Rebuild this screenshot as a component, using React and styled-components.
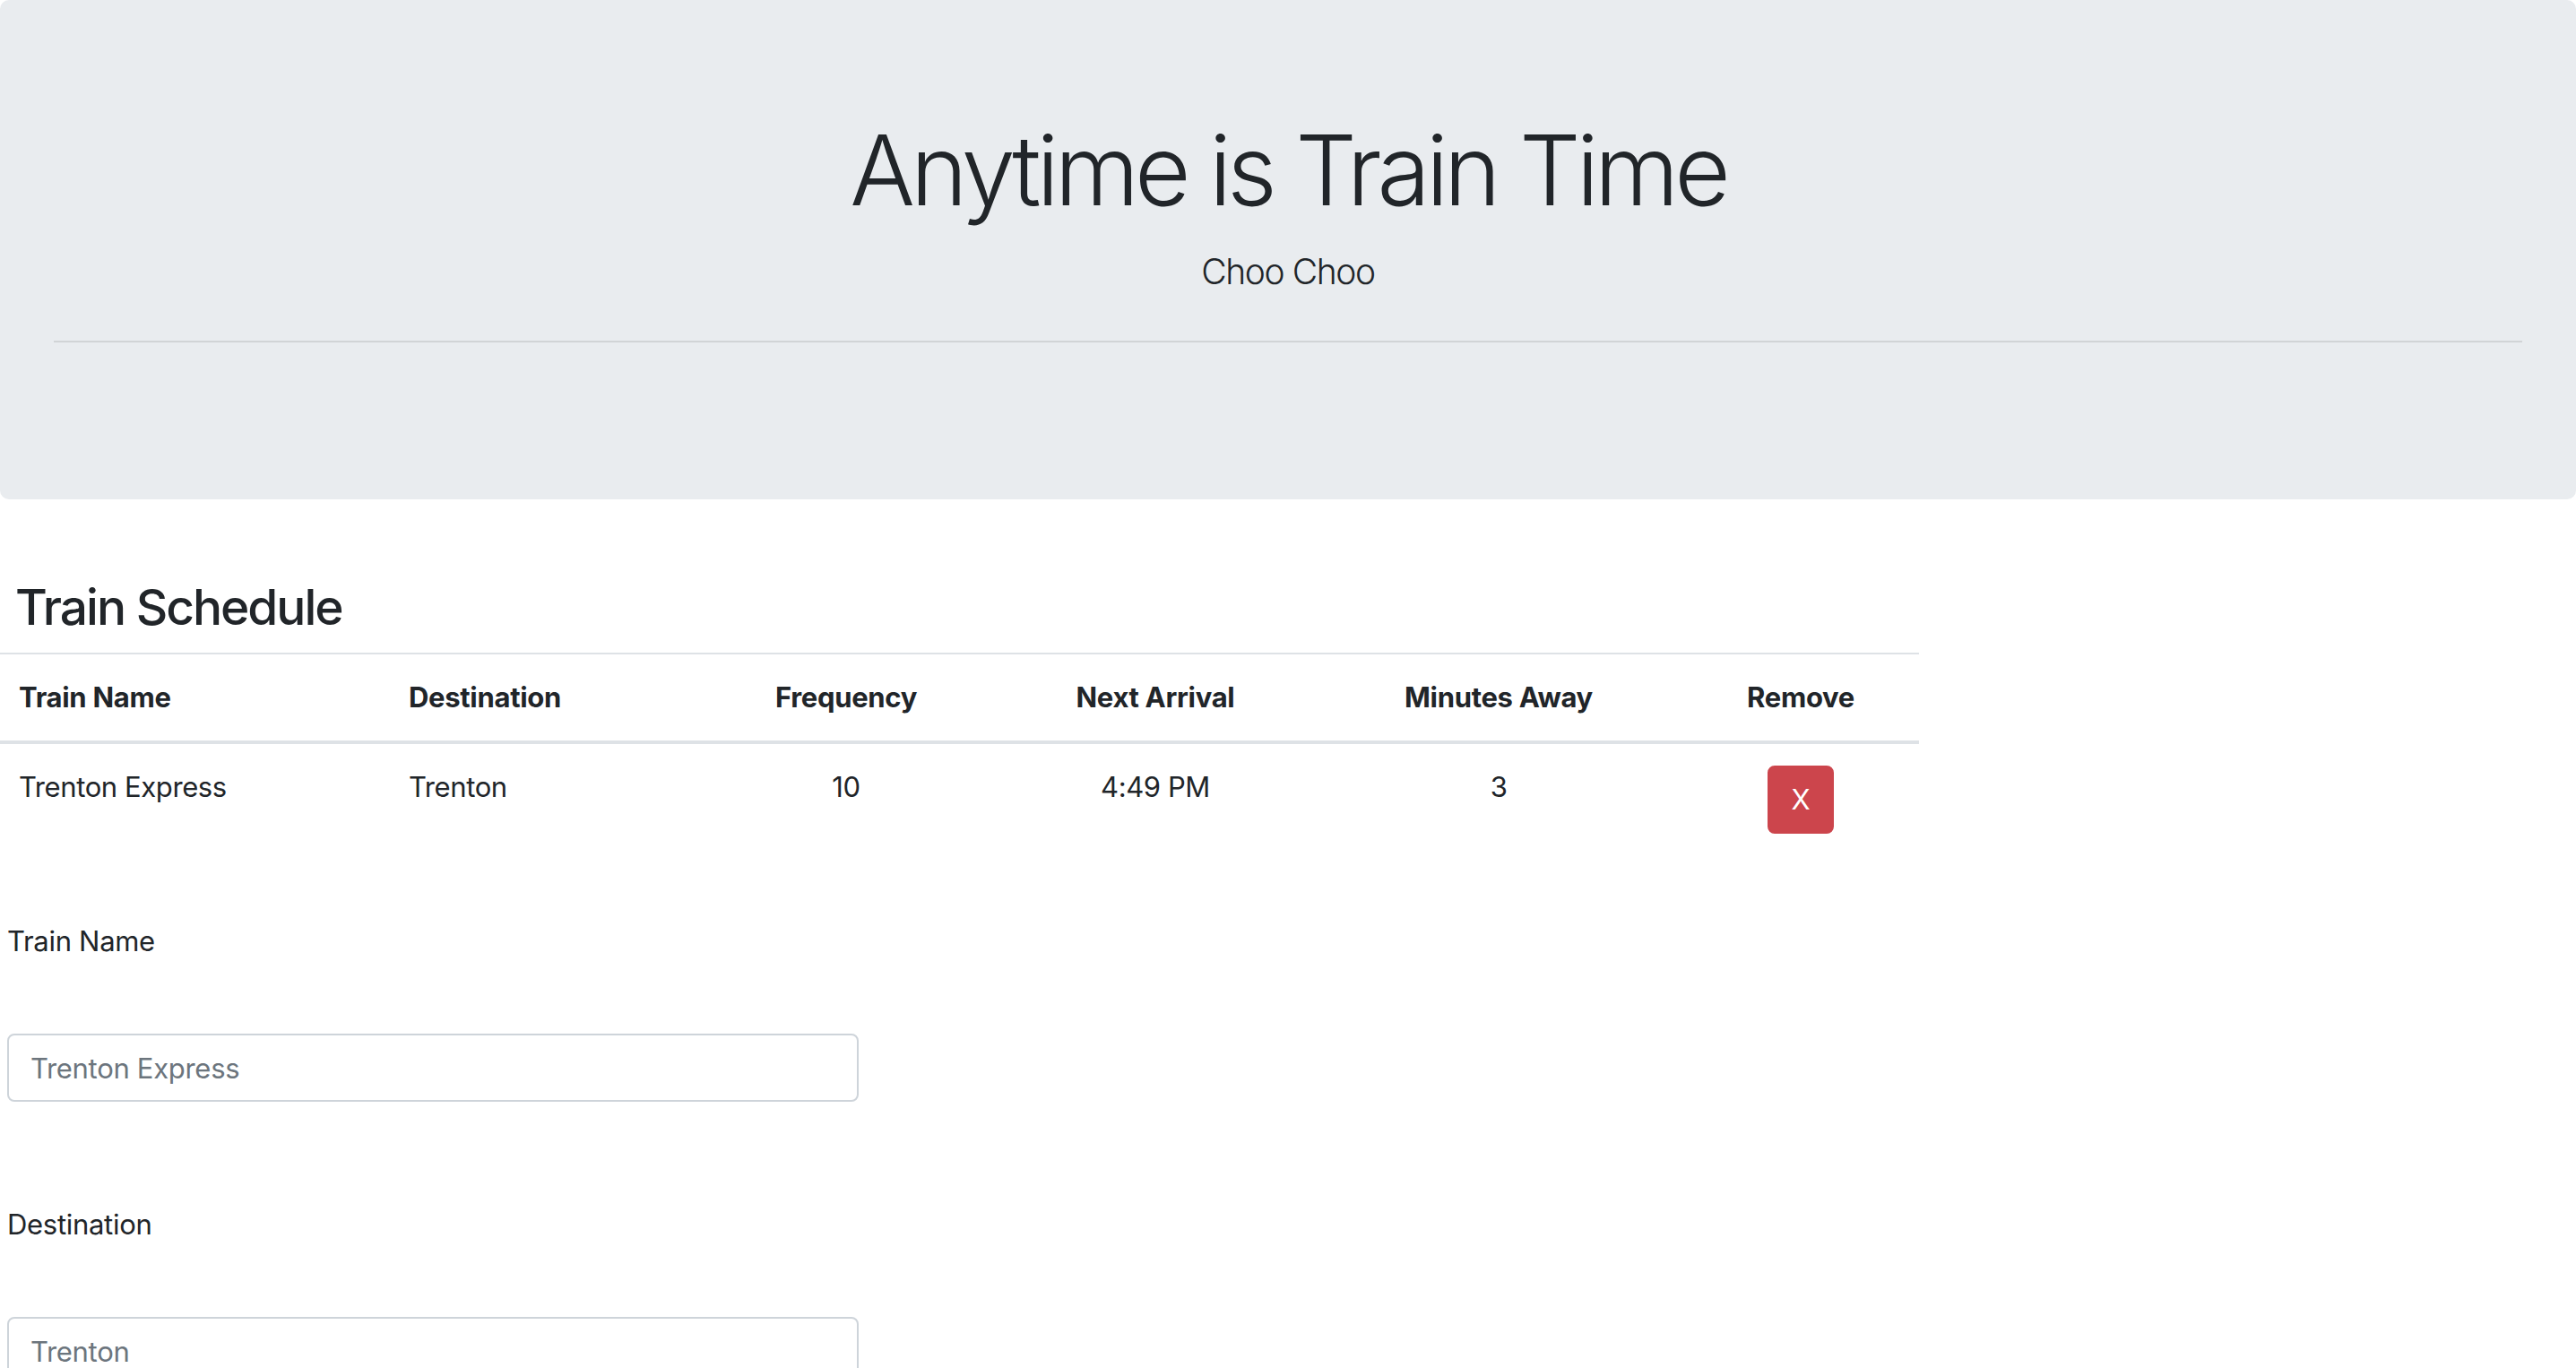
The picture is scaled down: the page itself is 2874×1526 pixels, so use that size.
import React from 'react';
import styled, { createGlobalStyle } from 'styled-components';

const textColor = '#212529';
const borderColor = '#dee2e6';

const GlobalStyle = createGlobalStyle`
  body {
    margin: 0;
    background: #fff;
    color: ${textColor};
    font-family: Inter, "Noto Sans", sans-serif;
  }
  * { box-sizing: border-box; }
`;

const Jumbotron = styled.header`
  background: #e9ecef;
  border-radius: 10px;
  padding: 125px 60px 175px;
  text-align: center;
`;

const Title = styled.h1`
  margin: 0;
  font-size: 108px;
  font-weight: 300;
  line-height: 1.2;
  letter-spacing: -5px;
`;

const Lead = styled.p`
  margin: 19px 0 0;
  font-size: 39px;
  font-weight: 300;
  line-height: 1.5;
  letter-spacing: -1.4px;
`;

const Rule = styled.hr`
  margin: 48px 0 0;
  border: 0;
  border-top: 2px solid rgba(0, 0, 0, 0.1);
`;

const SectionTitle = styled.h3`
  margin: 87px 0 18px 17px;
  font-size: 55px;
  font-weight: 500;
  line-height: 1.2;
  letter-spacing: -2px;
`;

const Table = styled.table`
  width: 2141px;
  table-layout: fixed;
  border-collapse: collapse;
  font-size: 31px;
  line-height: 48px;

  th:first-child, td:first-child { padding-left: 21px; }
`;

const HeadCell = styled.th`
  padding: 24px;
  font-weight: 700;
  text-align: ${p => p.align || 'left'};
  vertical-align: bottom;
  border-top: 2px solid ${borderColor};
  border-bottom: 4px solid ${borderColor};
  letter-spacing: -0.3px;
`;

const Cell = styled.td`
  padding: 24px;
  text-align: ${p => p.align || 'left'};
  vertical-align: top;
  letter-spacing: -0.4px;
`;

const RemoveButton = styled.button`
  display: inline-block;
  padding: 12px 24px;
  border: 2px solid #cc454c;
  border-radius: 8px;
  background: #cc454c;
  color: #fff;
  font-family: inherit;
  font-size: 31px;
  line-height: 48px;
  cursor: pointer;
`;

const Form = styled.form`
  padding-left: 8px;
`;

const FormGroup = styled.div`
  margin-top: ${p => p.gap}px;
`;

const Label = styled.label`
  display: block;
  margin-bottom: 79px;
  font-size: 31px;
  line-height: 48px;
  letter-spacing: -0.3px;
`;

const Input = styled.input`
  display: block;
  width: 950px;
  height: 76px;
  padding: 12px 24px;
  border: 2px solid #ced4da;
  border-radius: 8px;
  font-family: inherit;
  font-size: 31px;
  letter-spacing: -0.3px;
  color: #495057;
  &::placeholder { color: #6c757d; }
`;

const columns = [
  { label: 'Train Name', width: 432 },
  { label: 'Destination', width: 345 },
  { label: 'Frequency', width: 334, align: 'center' },
  { label: 'Next Arrival', width: 356, align: 'center' },
  { label: 'Minutes Away', width: 410, align: 'center' },
  { label: 'Remove', width: 264, align: 'center' },
];

const trains = [
  { name: 'Trenton Express', destination: 'Trenton', frequency: 10, next: '4:49 PM', away: 3 },
];

export default function App() {
  return (
    <>
      <GlobalStyle />
      <Jumbotron>
        <Title>Anytime is Train Time</Title>
        <Lead>Choo Choo</Lead>
        <Rule />
      </Jumbotron>

      <SectionTitle>Train Schedule</SectionTitle>
      <Table>
        <colgroup>
          {columns.map(c => <col key={c.label} style={{ width: c.width }} />)}
        </colgroup>
        <thead>
          <tr>
            {columns.map(c => <HeadCell key={c.label} align={c.align}>{c.label}</HeadCell>)}
          </tr>
        </thead>
        <tbody>
          {trains.map(t => (
            <tr key={t.name}>
              <Cell>{t.name}</Cell>
              <Cell>{t.destination}</Cell>
              <Cell align="center">{t.frequency}</Cell>
              <Cell align="center">{t.next}</Cell>
              <Cell align="center">{t.away}</Cell>
              <Cell align="center"><RemoveButton type="button">X</RemoveButton></Cell>
            </tr>
          ))}
        </tbody>
      </Table>

      <Form>
        <FormGroup gap={72}>
          <Label htmlFor="train-name">Train Name</Label>
          <Input id="train-name" placeholder="Trenton Express" />
        </FormGroup>
        <FormGroup gap={113}>
          <Label htmlFor="destination">Destination</Label>
          <Input id="destination" placeholder="Trenton" />
        </FormGroup>
      </Form>
    </>
  );
}
